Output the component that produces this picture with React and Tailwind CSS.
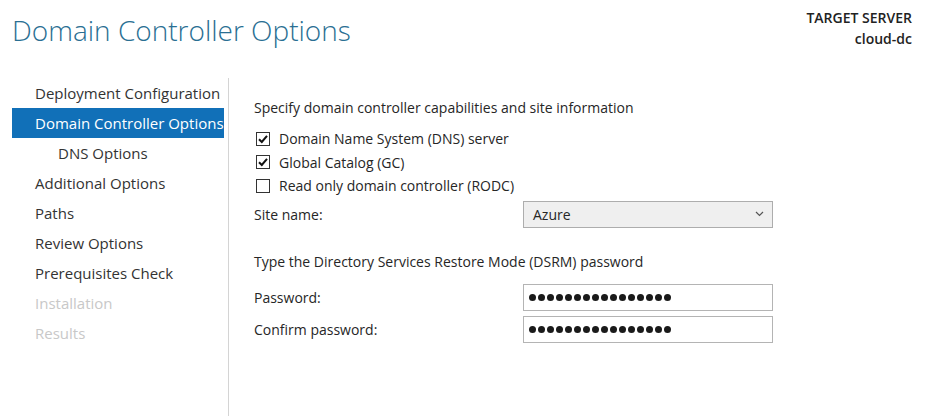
const STEPS = [
  { label: 'Deployment Configuration' },
  { label: 'Domain Controller Options', active: true },
  { label: 'DNS Options', sub: true },
  { label: 'Additional Options' },
  { label: 'Paths' },
  { label: 'Review Options' },
  { label: 'Prerequisites Check' },
  { label: 'Installation', disabled: true },
  { label: 'Results', disabled: true },
]

const font = { fontFamily: '"Open Sans", "Noto Sans", sans-serif' }

function Checkbox({ checked, label }) {
  return (
    <div className="flex items-center h-[23.5px]">
      <div className="ml-[2px] w-[14px] h-[14px] border border-[#333] bg-white flex items-center justify-center">
        {checked && (
          <svg width="12" height="12" viewBox="0 0 12 12">
            <path d="M2 6.2 L4.8 9 L10 2.8" fill="none" stroke="#111" strokeWidth="2" />
          </svg>
        )}
      </div>
      <span className="ml-[9px]">{label}</span>
    </div>
  )
}

function Dots() {
  return (
    <div className="flex gap-[2px] items-center">
      {Array.from({ length: 16 }).map((_, i) => (
        <span key={i} className="w-[7px] h-[7px] rounded-full bg-[#1a1a1a]" />
      ))}
    </div>
  )
}

export default function App() {
  return (
    <div className="w-[927px] h-[416px] bg-white overflow-hidden text-[#1f1f1f]" style={font}>
      <div className="flex justify-between h-[79px]">
        <h1 className="pl-3 pt-[10px] text-[28px] font-light leading-[40px] text-[#2a6f93]">Domain Controller Options</h1>
        <div className="pr-[15px] pt-[7px] text-right text-[14px] font-semibold leading-[21px] text-[#222]">
          <div>TARGET SERVER</div>
          <div>cloud-dc</div>
        </div>
      </div>
      <div className="flex h-[337px]">
        <div className="w-[229px] border-r border-[#d4d4d4] pl-3 pr-1 -mt-px">
          {STEPS.map(s => (
            <div key={s.label}
              className={`h-[30px] flex items-center text-[15px] ${s.sub ? 'pl-[46px]' : 'pl-[23px]'} ${s.active ? 'bg-[#1170b8] text-white' : s.disabled ? 'text-[#c8c8c8]' : 'text-[#333]'}`}>
              {s.label}
            </div>
          ))}
        </div>
        <div className="pl-[25px] pt-[18px] text-[14px] text-[#262626]">
          <div className="h-[20px] flex items-center">Specify domain controller capabilities and site information</div>
          <div className="mt-[10px]">
            <Checkbox checked label="Domain Name System (DNS) server" />
            <Checkbox checked label="Global Catalog (GC)" />
            <Checkbox label="Read only domain controller (RODC)" />
          </div>
          <div className="flex items-center mt-[3px]">
            <div className="w-[269px]">Site name:</div>
            <div className="w-[250px] h-[27px] bg-[#efefef] border border-[#adadad] flex items-center justify-between pl-[9px] pr-[8px]">
              <span>Azure</span>
              <svg width="9" height="6" viewBox="0 0 9 6">
                <path d="M1 1 L4.5 4.5 L8 1" fill="none" stroke="#555" strokeWidth="1.2" />
              </svg>
            </div>
          </div>
          <div className="h-[20px] flex items-center mt-[24px]">Type the Directory Services Restore Mode (DSRM) password</div>
          <div className="flex items-center mt-[12px]">
            <div className="w-[269px]">Password:</div>
            <div className="w-[250px] h-[27px] bg-white border border-[#b4b4b4] flex items-center pl-[5px]">
              <Dots />
            </div>
          </div>
          <div className="flex items-center mt-[5px]">
            <div className="w-[269px]">Confirm password:</div>
            <div className="w-[250px] h-[27px] bg-white border border-[#b4b4b4] flex items-center pl-[5px]">
              <Dots />
            </div>
          </div>
        </div>
      </div>
    </div>
  )
}
